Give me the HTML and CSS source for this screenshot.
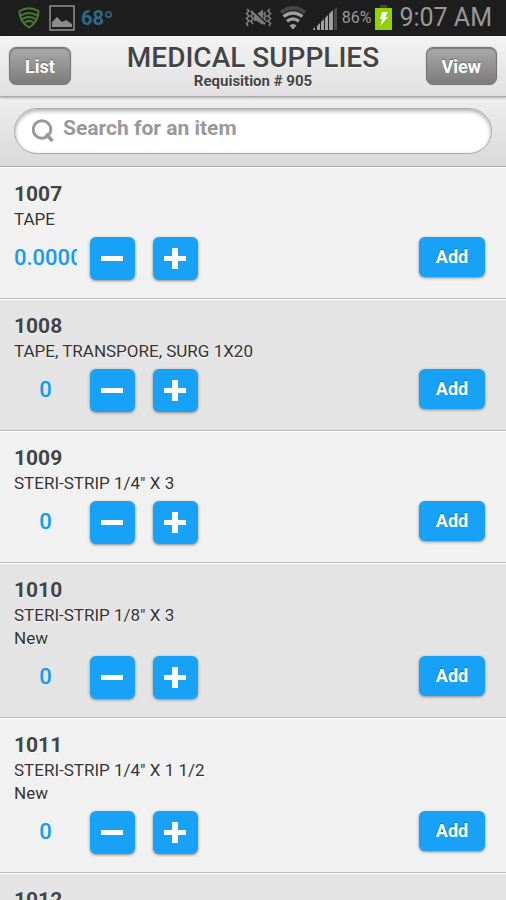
FILE: index.html
```html
<!DOCTYPE html>
<html lang="en">
<head>
<meta charset="utf-8">
<meta name="viewport" content="width=device-width, initial-scale=1">
<title>Medical Supplies</title>
<link rel="stylesheet" href="styles.css">
</head>
<body>
<div class="status">
  <div class="status-group">
    <svg class="shield" width="22" height="22" viewBox="0 0 22 22" fill="none" stroke="#4b7a30" stroke-width="2" stroke-linecap="round">
      <path d="M1.500 4Q11 -1.500 20.500 4Q20.500 15 11 20.500Q1.500 15 1.500 4Z"/>
      <path d="M3 8.300Q11 3.500 19 8.300M4.500 12Q11 7.800 17.500 12M7 15.500Q11 12.300 15 15.500"/>
    </svg>
    <svg class="photo" width="26" height="26" viewBox="0 0 26 26">
      <rect x="1" y="1" width="24" height="24" fill="none" stroke="#8b8b8b" stroke-width="1.600"/>
      <path d="M3 22V17L8 12L13 17L17 15L23 19V22Z" fill="#8b8b8b"/>
    </svg>
    <span class="temp">68º</span>
  </div>
  <div class="status-group">
    <svg class="mute" width="27" height="20" viewBox="0 0 27 20" fill="none" stroke="#7c7c7c" stroke-width="1.700">
      <path d="M2 1L4 3L1.500 5.500L4 8L1.500 10.500L4 13L1.500 15.500L3 18M6.500 4L8 6L6 8L8 10.500L6 13L8 16M25 1L23 3L25.500 5.500L23 8L25.500 10.500L23 13L25.500 15.500L24 18M20.500 4L19 6L21 8L19 10.500L21 13L19 16"/>
      <path d="M9 6H12L18 1.500V17L12 13H9Z" fill="#7c7c7c" stroke="none"/>
      <path d="M7 2L21 15" stroke="#1e1e1e" stroke-width="2"/>
      <path d="M6 3L20 16" stroke-width="2"/>
    </svg>
    <svg class="wifi" width="28" height="24" viewBox="0 0 28 24" fill="none" stroke="#a0a0a0" stroke-width="3.200">
      <path d="M2 6.500Q14 -2.500 26 6.500" stroke="#454545" stroke-width="4"/>
      <path d="M4.500 10.500Q14 3.500 23.500 10.500M8 15.200Q14 10.500 20 15.200"/>
      <path d="M10.500 19.500Q14 16.500 17.500 19.500L14 23.500Z" fill="#a0a0a0" stroke="none"/>
    </svg>
    <svg class="signal" width="25" height="24" viewBox="0 0 25 24">
      <path d="M0 24V23L2 21V24ZM4 24V20L7 17V24ZM8 24V16L11 13V24ZM12 24V12L15 9V24ZM16 24V8L20 4V24Z" fill="#a0a0a0"/>
      <path d="M21 24V4L24 1V24Z" fill="#4a4a4a"/>
    </svg>
    <span class="percent">86%</span>
    <svg class="battery" width="17" height="25" viewBox="0 0 17 25">
      <path d="M5 0H12V3H5Z" fill="#444"/>
      <path d="M0 3H17V25H0Z" fill="#8fd400"/>
      <path d="M7 7H13L10 12H13L5 21L7.500 14H5Z" fill="#fff"/>
    </svg>
    <span class="clock">9:07 AM</span>
  </div>
</div>
<header class="bar">
  <button class="nav" type="button">List</button>
  <div class="heading">
    <h1>MEDICAL SUPPLIES</h1>
    <p>Requisition # 905</p>
  </div>
  <button class="nav" type="button">View</button>
</header>
<form class="search">
  <label class="field">
    <svg width="23" height="24" viewBox="0 0 23 24" fill="none" stroke="#999" stroke-width="3"><circle cx="10" cy="10.500" r="8.800"/><path d="M14 15L20.500 22" stroke-width="3.500"/></svg>
    <input type="search" aria-label="Search for an item" placeholder="Search for an item">
  </label>
</form>
<main>
  <ul class="items">
    <li class="item">
      <h2>1007</h2>
      <p>TAPE</p>
      <div class="actions">
        <input class="qty" type="text" aria-label="Quantity of 1007" value="0.0000">
        <button class="step minus" type="button" aria-label="Decrease"></button>
        <button class="step plus" type="button" aria-label="Increase"></button>
        <button class="add" type="button">Add</button>
      </div>
    </li>
    <li class="item">
      <h2>1008</h2>
      <p>TAPE, TRANSPORE, SURG 1X20</p>
      <div class="actions">
        <input class="qty" type="text" aria-label="Quantity of 1008" value="0">
        <button class="step minus" type="button" aria-label="Decrease"></button>
        <button class="step plus" type="button" aria-label="Increase"></button>
        <button class="add" type="button">Add</button>
      </div>
    </li>
    <li class="item">
      <h2>1009</h2>
      <p>STERI-STRIP 1/4" X 3</p>
      <div class="actions">
        <input class="qty" type="text" aria-label="Quantity of 1009" value="0">
        <button class="step minus" type="button" aria-label="Decrease"></button>
        <button class="step plus" type="button" aria-label="Increase"></button>
        <button class="add" type="button">Add</button>
      </div>
    </li>
    <li class="item">
      <h2>1010</h2>
      <p>STERI-STRIP 1/8" X 3</p>
      <p>New</p>
      <div class="actions">
        <input class="qty" type="text" aria-label="Quantity of 1010" value="0">
        <button class="step minus" type="button" aria-label="Decrease"></button>
        <button class="step plus" type="button" aria-label="Increase"></button>
        <button class="add" type="button">Add</button>
      </div>
    </li>
    <li class="item">
      <h2>1011</h2>
      <p>STERI-STRIP 1/4" X 1 1/2</p>
      <p>New</p>
      <div class="actions">
        <input class="qty" type="text" aria-label="Quantity of 1011" value="0">
        <button class="step minus" type="button" aria-label="Decrease"></button>
        <button class="step plus" type="button" aria-label="Increase"></button>
        <button class="add" type="button">Add</button>
      </div>
    </li>
    <li class="item">
      <h2>1012</h2>
    </li>
  </ul>
</main>
</body>
</html>
```
FILE: styles.css
```css
* { box-sizing: border-box; }

body {
  margin: 0;
  height: 100vh;
  display: flex;
  flex-direction: column;
  overflow: hidden;
  background: #f1f1f1;
  color: #444;
  font-family: Roboto, "Liberation Sans", sans-serif;
}

h1, h2, p, ul { margin: 0; padding: 0; }
button, input { font-family: inherit; }

.status {
  flex: none;
  height: 36px;
  padding: 0 14px 0 18px;
  display: flex;
  align-items: center;
  justify-content: space-between;
  background: #1e1e1e;
  border-bottom: 1px solid #111;
  white-space: nowrap;
}

.status-group { display: flex; align-items: center; }
.photo { margin: 0 6px 0 9px; }
.temp { font-size: 20px; font-weight: 700; color: #2b6c88; }
.wifi { margin: 0 6px 0 7px; }
.percent { margin: 0 4px 0 4px; font-size: 16px; color: #999; }
.clock { margin-left: 7px; font-size: 25px; font-weight: 400; color: #999; }

.bar {
  flex: none;
  height: 61px;
  padding: 0 9px;
  display: grid;
  grid-template-columns: 1fr auto 1fr;
  align-items: center;
  background: linear-gradient(#f3f3f3, #e0e0e0);
  border-bottom: 1px solid #aaa;
  box-shadow: 0 1px 2px #aaa;
  position: relative;
}

.heading { padding-top: 2px; text-align: center; text-shadow: 0 1px 1px #fff; }
.heading h1 { font-size: 28px; line-height: 28px; font-weight: 500; }
.heading p { font-size: 15px; line-height: 18px; font-weight: 700; }

.nav {
  height: 38px;
  justify-self: start;
  padding: 0 15px;
  border: 1px solid #777;
  border-radius: 7px;
  background: linear-gradient(#aaa, #7b7b7b);
  box-shadow: inset 0 1px 1px #777, 0 0 0 1px #ddd;
  color: #fff;
  font-size: 18px;
  font-weight: 700;
  text-shadow: 0 -1px 1px #666;
}

.nav:last-child { justify-self: end; }

.search {
  flex: none;
  height: 70px;
  padding: 11px 14px 12px;
  background: linear-gradient(#eee, #d9d9d9);
  border-bottom: 1px solid #aaa;
}

.field {
  height: 46px;
  padding: 0 17px;
  display: flex;
  align-items: center;
  gap: 8px;
  border: 1px solid #aaa;
  border-radius: 23px;
  background: #fff;
  box-shadow: inset 0 2px 4px #aaa;
}

.field input {
  flex: 1;
  min-width: 0;
  height: 24px;
  margin-bottom: 6px;
  padding: 0;
  border: 0;
  outline: 0;
  background: none;
  font-size: 21px;
  font-weight: 700;
}

.field input::placeholder { color: #999; }

main { flex: 1; min-height: 0; overflow: hidden; }

.items { list-style: none; }

.item {
  padding: 15px 21px 18px 14px;
  background: #f1f1f1;
  border-bottom: 1px solid #bbb;
  box-shadow: inset 0 1px #fff;
  text-shadow: 0 1px 1px #fff;
}

.item:nth-child(even) { background: #e4e4e4; }
.item h2 { font-size: 21px; line-height: 25px; font-weight: 700; }
.item h2 + p { margin-top: 1px; }
.item p { font-size: 17px; line-height: 23px; color: #333; }

.actions { margin-top: 6px; display: flex; align-items: flex-start; }

.qty {
  width: 63px;
  height: 40px;
  margin-right: 13px;
  padding: 0;
  border: 0;
  background: none;
  color: #109cf1;
  font-size: 22px;
  font-weight: 500;
  text-align: center;
}

.step, .add {
  border: 0;
  border-radius: 6px;
  background-color: #17a2f8;
  box-shadow: 0 1px 3px #888;
  color: #fff;
}

.step {
  width: 45px;
  height: 43px;
  margin-right: 18px;
  background-position: 11px center;
  background-repeat: no-repeat;
}

.minus {
  background-image: linear-gradient(#fff, #fff);
  background-size: 22px 5px;
}

.plus {
  background-image: linear-gradient(#fff, #fff), linear-gradient(#fff, #fff);
  background-position: 11px center, 19px center;
  background-size: 22px 5px, 6px 21px;
}

.add {
  width: 66px;
  height: 40px;
  margin-left: auto;
  padding: 0 0 2px;
  font-size: 18px;
  font-weight: 700;
  text-shadow: 0 -1px 1px #0872b5;
}
```
